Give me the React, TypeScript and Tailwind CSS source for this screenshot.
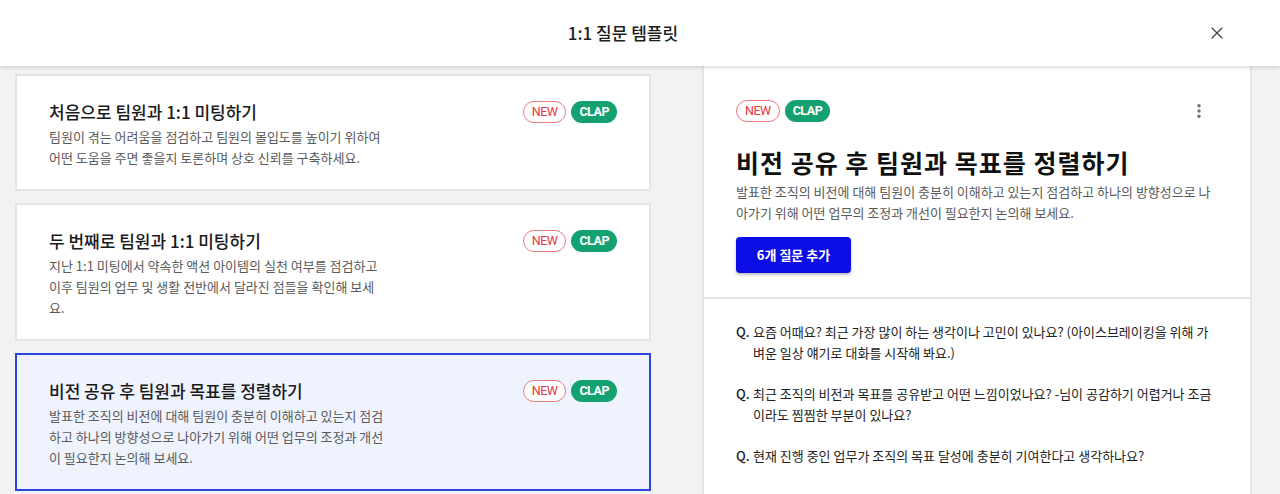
import React from 'react';
import { X, EllipsisVertical } from 'lucide-react';

interface Template {
    id: string;
    title: string;
    description: string;
}

const templates: Template[] = [
    {
        id: 'first',
        title: '처음으로 팀원과 1:1 미팅하기',
        description: '팀원이 겪는 어려움을 점검하고 팀원의 몰입도를 높이기 위하여 어떤 도움을 주면 좋을지 토론하며 상호 신뢰를 구축하세요.',
    },
    {
        id: 'second',
        title: '두 번째로 팀원과 1:1 미팅하기',
        description: '지난 1:1 미팅에서 약속한 액션 아이템의 실천 여부를 점검하고 이후 팀원의 업무 및 생활 전반에서 달라진 점들을 확인해 보세요.',
    },
    {
        id: 'vision',
        title: '비전 공유 후 팀원과 목표를 정렬하기',
        description: '발표한 조직의 비전에 대해 팀원이 충분히 이해하고 있는지 점검하고 하나의 방향성으로 나아가기 위해 어떤 업무의 조정과 개선이 필요한지 논의해 보세요.',
    },
];

const questions = [
    '요즘 어때요? 최근 가장 많이 하는 생각이나 고민이 있나요? (아이스브레이킹을 위해 가벼운 일상 얘기로 대화를 시작해 봐요.)',
    '최근 조직의 비전과 목표를 공유받고 어떤 느낌이었나요? -님이 공감하기 어렵거나 조금이라도 찜찜한 부분이 있나요?',
    '현재 진행 중인 업무가 조직의 목표 달성에 충분히 기여한다고 생각하나요?',
];

const Badges = () => (
    <div className="flex items-center gap-[5px] shrink-0 font-['Roboto',sans-serif] tracking-[-0.03em]">
        <span className="h-[22px] px-[8px] rounded-full border border-[#ec7a80] bg-white text-[#e5353e] text-[12.5px] leading-[20px]">
            NEW
        </span>
        <span className="h-[22px] px-[8px] rounded-full bg-[#13a172] text-white text-[12.5px] font-bold leading-[22px]">
            CLAP
        </span>
    </div>
);

export default function App() {
    const selectedId = 'vision';
    const selected = templates.find(t => t.id === selectedId)!;

    return (
        <div className="w-[1280px] h-[494px] overflow-hidden bg-[#f1f2f4] flex flex-col font-['Noto_Sans_CJK_KR',sans-serif]">
            <header className="h-[66px] shrink-0 bg-white pr-[34px] grid grid-cols-[1fr_auto_1fr] items-center relative z-10 shadow-[0_2px_4px_rgba(0,0,0,0.13)]">
                <div />
                <h1 className="text-[17px] font-medium text-[#1e1e1e]">1:1 질문 템플릿</h1>
                <div className="flex justify-end pr-[19px]">
                    <X size={20} strokeWidth={1.5} className="text-[#444]" />
                </div>
            </header>

            <div className="flex flex-1 min-h-0">
                {/* template list */}
                <div className="w-[651px] shrink-0 pl-[15px] pt-2 flex flex-col gap-[12px]">
                    {templates.map(t => {
                        const isSelected = t.id === selectedId;
                        return (
                            <div
                                key={t.id}
                                className={`flex justify-between px-8 pt-6 pb-[21px] border-2 cursor-pointer ${
                                    isSelected ? 'border-[#2b44de] bg-[#eef3fe]' : 'border-[#e2e4e8] bg-white'
                                }`}
                            >
                                <div className="w-[338px]">
                                    <h2 className="text-[17px] leading-[24px] text-[#1a1a1a] font-medium whitespace-nowrap">
                                        {t.title}
                                    </h2>
                                    <p className="mt-[2px] text-[13px] leading-[21px] text-[#5a5a5a]">
                                        {t.description}
                                    </p>
                                </div>
                                <div className="pt-px">
                                    <Badges />
                                </div>
                            </div>
                        );
                    })}
                </div>

                {/* detail */}
                <div className="ml-[51px] w-[550px] shrink-0 bg-white border-x-2 border-[#e3e5e9]">
                    <div className="pl-8 pr-[28px] pt-[34px] pb-6 border-b-2 border-[#e3e5e9]">
                        <div className="flex items-center justify-between">
                            <Badges />
                            <EllipsisVertical size={18} strokeWidth={2.5} className="text-[#6a6a6a] mr-[14px]" />
                        </div>
                        <h2 className="mt-[23px] text-[25px] leading-[34px] font-bold text-[#111] tracking-[0.04em]">
                            {selected.title}
                        </h2>
                        <p className="mt-[2px] text-[13px] leading-[21px] text-[#5a5a5a]">
                            {selected.description}
                        </p>
                        <button className="mt-[14px] h-9 w-[115px] rounded-[4px] bg-[#0d0de6] text-white text-[13px] font-bold shadow-[0_2px_3px_rgba(0,0,0,0.25)]">
                            6개 질문 추가
                        </button>
                    </div>
                    <div className="pl-8 pr-[34px] pt-[22px] flex flex-col gap-5">
                        {questions.map((q, i) => (
                            <div key={i} className="flex text-[13px] leading-[21px] text-[#222]">
                                <span className="w-[17px] shrink-0 font-medium">Q.</span>
                                <span>{q}</span>
                            </div>
                        ))}
                    </div>
                </div>
            </div>
        </div>
    );
}
